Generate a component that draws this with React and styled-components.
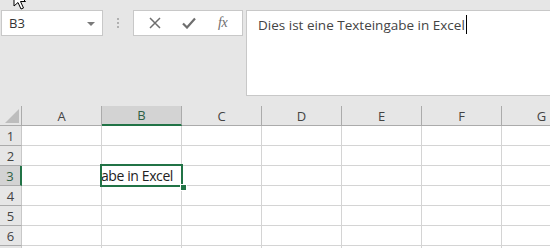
import React from 'react';
import styled, { createGlobalStyle } from 'styled-components';

const Global = createGlobalStyle`
  html, body { margin: 0; padding: 0; }
  body {
    width: 550px;
    height: 248px;
    overflow: hidden;
    background: #e6e6e6;
    font-family: "Open Sans", "Noto Sans", sans-serif;
  }
`;

const Page = styled.div`
  position: relative;
  width: 550px;
  height: 248px;
  overflow: hidden;
`;

const Toolbar = styled.div`
  display: flex;
  align-items: flex-start;
  height: 106px;
  padding: 10px 0 0 1px;
  box-sizing: border-box;
`;

const NameBox = styled.div`
  width: 102px;
  height: 26px;
  box-sizing: border-box;
  background: #fff;
  border: 1px solid #c8c8c8;
  display: flex;
  align-items: center;
  justify-content: space-between;
  padding: 0 7px 0 7px;
  font-size: 13px;
  color: #333;
`;

const Arrow = styled.span`
  width: 0;
  height: 0;
  border-left: 4px solid transparent;
  border-right: 4px solid transparent;
  border-top: 4px solid #7a7a7a;
  margin-top: 1px;
`;

const Grip = styled.div`
  width: 30px;
  height: 26px;
  display: flex;
  flex-direction: column;
  align-items: center;
  justify-content: center;
  gap: 2px;
  span {
    width: 2px;
    height: 2px;
    background: #b0b0b0;
  }
`;

const ButtonBox = styled.div`
  width: 110px;
  height: 26px;
  box-sizing: border-box;
  background: #fff;
  border: 1px solid #c8c8c8;
  display: flex;
  align-items: center;
  justify-content: space-around;
  padding: 0 4px;
`;

const Fx = styled.span`
  font-family: "Liberation Serif", serif;
  font-style: italic;
  font-size: 14px;
  color: #6e6e6e;
  letter-spacing: -0.5px;
`;

const FormulaBar = styled.div`
  margin-left: 3px;
  flex: 1;
  height: 86px;
  box-sizing: border-box;
  background: #fff;
  border: 1px solid #c8c8c8;
  border-right: none;
  padding: 4px 0 0 11px;
  font-size: 13.5px;
  color: #444;
  line-height: 20px;
`;

const Caret = styled.span`
  display: inline-block;
  width: 0;
  height: 19px;
  border-left: 1px solid #000;
  vertical-align: top;
  margin-left: 1px;
`;

const Sheet = styled.div`
  position: relative;
  display: grid;
  grid-template-columns: 22px repeat(7, 80px);
  grid-auto-rows: 20px;
`;

const Head = styled.div`
  box-sizing: border-box;
  background: ${p => (p.$active ? '#d3d3d3' : '#e6e6e6')};
  border-right: 1px solid ${p => (p.$vertical ? '#ababab' : '#c8c8c8')};
  border-bottom: 1px solid #ababab;
  display: flex;
  align-items: center;
  justify-content: center;
  font-size: 13px;
  color: ${p => (p.$active ? '#2f5f45' : '#444')};
  ${p => p.$active && p.$col && 'border-bottom: 2px solid #217346;'}
  ${p => p.$active && p.$row && 'border-right: 2px solid #217346;'}
`;

const Corner = styled.div`
  box-sizing: border-box;
  background: #e6e6e6;
  border-right: 1px solid #ababab;
  border-bottom: 1px solid #ababab;
  position: relative;
  &::after {
    content: '';
    position: absolute;
    right: 2px;
    bottom: 2px;
    width: 0;
    height: 0;
    border-left: 14px solid transparent;
    border-bottom: 14px solid #bdbdbd;
  }
`;

const Cell = styled.div`
  box-sizing: border-box;
  background: #fff;
  border-right: 1px solid #d4d4d4;
  border-bottom: 1px solid #d4d4d4;
`;

const Selection = styled.div`
  position: absolute;
  left: 100px;
  top: 58px;
  width: 83px;
  height: 23px;
  box-sizing: border-box;
  border: 2px solid #217346;
  display: flex;
  align-items: center;
  justify-content: flex-end;
  overflow: hidden;
  padding-right: 8px;
  font-size: 14px;
  letter-spacing: -0.4px;
  color: #222;
  white-space: nowrap;
  background: #fff;
`;

const Handle = styled.div`
  position: absolute;
  left: 180px;
  top: 78px;
  width: 5px;
  height: 5px;
  background: #217346;
  border: 1px solid #fff;
`;

const Pointer = styled.svg`
  position: absolute;
  left: 13px;
  top: -11px;
`;

const cols = ['A', 'B', 'C', 'D', 'E', 'F', 'G'];
const rows = [1, 2, 3, 4, 5, 6, 7];

export default function App() {
  return (
    <Page>
      <Global />
      <Toolbar>
        <NameBox>
          <span>B3</span>
          <Arrow />
        </NameBox>
        <Grip>
          <span />
          <span />
          <span />
        </Grip>
        <ButtonBox>
          <svg width="12" height="12" viewBox="0 0 12 12">
            <path d="M1 1L11 11M11 1L1 11" stroke="#6e6e6e" strokeWidth="1.5" fill="none" />
          </svg>
          <svg width="14" height="12" viewBox="0 0 14 12">
            <path d="M1 6.5L5 10.5L13 1.5" stroke="#6e6e6e" strokeWidth="2.2" fill="none" />
          </svg>
          <Fx>fx</Fx>
        </ButtonBox>
        <FormulaBar>
          Dies ist eine Texteingabe in Excel<Caret />
        </FormulaBar>
      </Toolbar>
      <Sheet>
        <Corner />
        {cols.map(c => (
          <Head key={c} $vertical $col $active={c === 'B'}>{c}</Head>
        ))}
        {rows.map(r => (
          <React.Fragment key={r}>
            <Head $row $active={r === 3}>{r}</Head>
            {cols.map(c => (
              <Cell key={c} />
            ))}
          </React.Fragment>
        ))}
        <Selection>Texteingabe in Excel</Selection>
        <Handle />
      </Sheet>
      <Pointer width="16" height="22" viewBox="0 0 16 22">
        <path d="M1 1L1 17L5 13.5L8 20L10.5 19L7.5 12.5L12.5 12.5Z" fill="#fff" stroke="#000" strokeWidth="1" />
      </Pointer>
    </Page>
  );
}
